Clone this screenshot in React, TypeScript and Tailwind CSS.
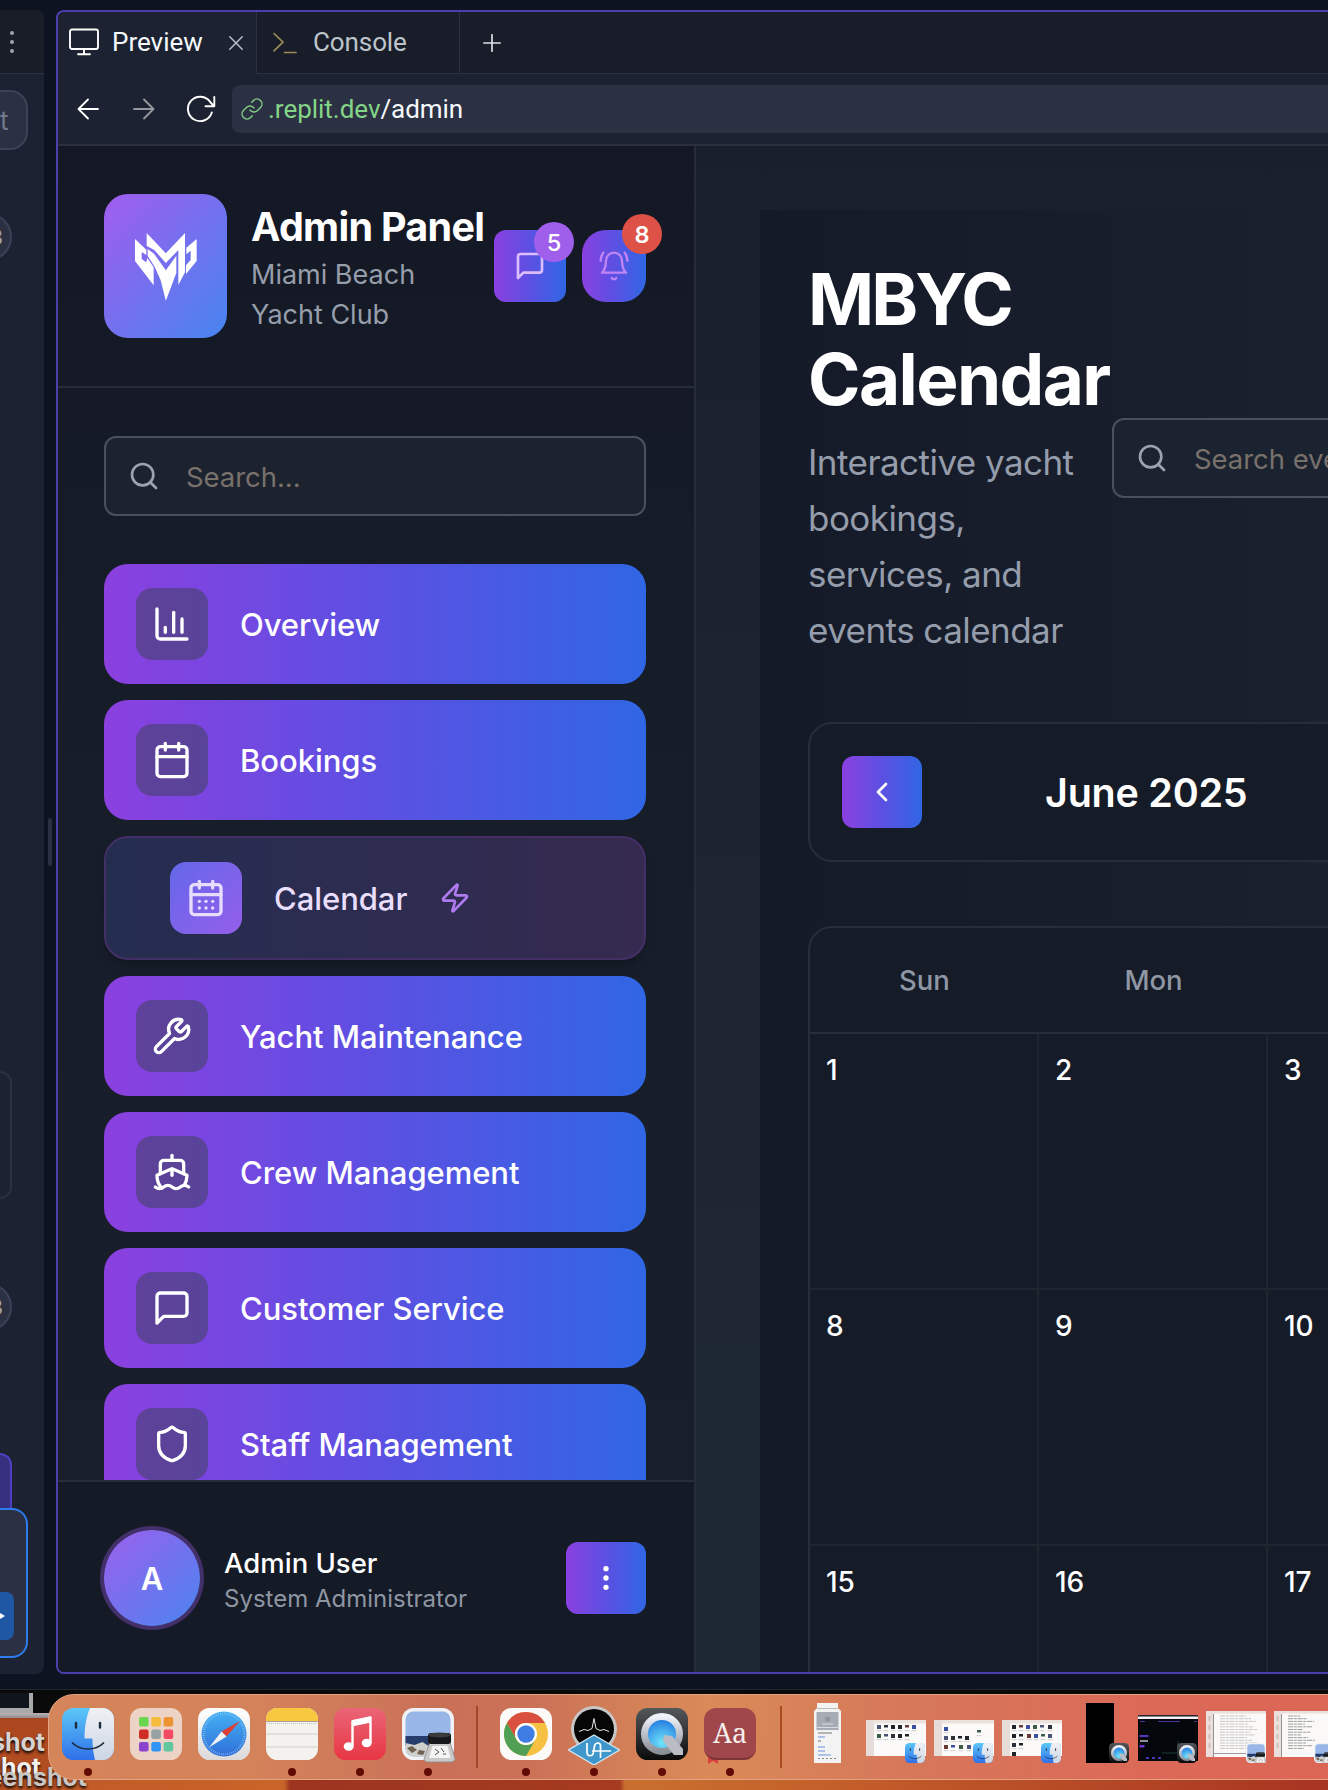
import React from "react";
import { Search, Shield, Wrench, Ship, Zap, Calendar, CalendarDays, ChevronLeft } from "lucide-react";

const stroke = { fill: "none", stroke: "currentColor", strokeLinecap: "round", strokeLinejoin: "round" } as const;

function MessageIcon({ className, w = 2 }: { className: string; w?: number }) {
  return (
    <svg viewBox="0 0 24 24" className={className} {...stroke} strokeWidth={w}>
      <path d="M21 15a2 2 0 0 1-2 2H7l-4 4V5a2 2 0 0 1 2-2h14a2 2 0 0 1 2 2z" />
    </svg>
  );
}

function BellIcon({ className }: { className: string }) {
  return (
    <svg viewBox="0 0 24 24" className={className} {...stroke} strokeWidth={1.8}>
      <path d="M6 8a6 6 0 0 1 12 0c0 7 3 9 3 9H3s3-2 3-9" />
      <path d="M10.3 21a1.94 1.94 0 0 0 3.4 0" />
      <path d="M4 2C2.8 3.7 2 5.7 2 8" />
      <path d="M22 8c0-2.3-.8-4.3-2-6" />
    </svg>
  );
}

function ChartIcon({ className }: { className: string }) {
  return (
    <svg viewBox="0 0 24 24" className={className} {...stroke} strokeWidth={2}>
      <path d="M3 3v16a2 2 0 0 0 2 2h16" />
      <path d="M18 17V9" />
      <path d="M13 17V5" />
      <path d="M8 17v-3" />
    </svg>
  );
}

function DotsIcon({ className }: { className: string }) {
  return (
    <svg viewBox="0 0 24 24" className={className} fill="currentColor">
      <circle cx="12" cy="5" r="2" />
      <circle cx="12" cy="12" r="2" />
      <circle cx="12" cy="19" r="2" />
    </svg>
  );
}

function ClubLogo() {
  return (
    <svg viewBox="3 4 270 270" className="h-[90px] w-[90px]" fill="#fff">
      <path d="M80 40 137.500 101 195 40V158L175 196V91L137.500 130 103 91 80 79Z" />
      <path d="M83 88 102 102 137.500 152 169 108V160L137.500 243 122 182 104 141 83 109Z" />
      <path d="M45 58 79 90V106L65 97V118L79 128 82 115 101 143V197L45 124Z" />
      <path d="M230 58V124L198 163V137L212 121V93L199 104V84Z" />
    </svg>
  );
}

const navIcon = "h-10 w-10";

function NavItem({ label, icon }: { label: string; icon: React.ReactNode }) {
  return (
    <div className="flex h-[120px] shrink-0 items-center rounded-[24px] bg-linear-to-r/srgb from-[#8b40e0] via-[#5c50e2] to-[#3066e4] pl-8 text-white">
      <div className="flex h-[72px] w-[72px] items-center justify-center rounded-[16px] bg-[#374151]/50">{icon}</div>
      <span className="ml-8 pt-0.5 text-[31px] leading-[48px] font-medium tracking-[-0.06px] whitespace-nowrap">{label}</span>
    </div>
  );
}

function Sidebar() {
  return (
    <aside className="flex w-[638px] shrink-0 flex-col border-r-2 border-[#262c38] bg-linear-to-b from-[#131824] via-[#171e2a] to-[#181f2b]">
      <header className="flex h-[242px] shrink-0 items-center border-b-2 border-[#262d38] pl-[46px]">
        <div className="flex h-[144px] w-[123px] items-center justify-center rounded-[24px] bg-linear-to-br/srgb from-[#a15cee] to-[#4785f0]">
          <ClubLogo />
        </div>
        <div className="ml-6 w-[243px] pt-0.5 whitespace-nowrap">
          <div className="text-[39.5px] leading-[56px] font-bold tracking-[-0.7px] text-white">Admin Panel</div>
          <div className="text-[27px] leading-10 text-[#979eab]">Miami Beach</div>
          <div className="text-[27px] leading-10 text-[#979eab]">Yacht Club</div>
        </div>
        <div className="flex gap-4">
          <div className="relative flex h-[72px] w-[72px] items-center justify-center rounded-[12px] bg-linear-to-r/srgb from-[#8b40e0] via-[#5c50e2] to-[#3066e4]">
            <MessageIcon className="h-8 w-8 text-[#dcbcfa]" />
            <span className="absolute -top-2 -right-2 flex h-10 w-10 items-center justify-center rounded-full bg-[#9f5fea] pt-0.5 text-[23.500px] font-medium text-white">5</span>
          </div>
          <div className="relative flex h-[72px] w-[64px] items-center justify-center rounded-[24px] bg-linear-to-r/srgb from-[#8b40e0] via-[#5c50e2] to-[#3066e4]">
            <BellIcon className="h-8 w-8 text-[#bf84f5]" />
            <span className="absolute -top-4 -right-4 flex h-10 w-10 items-center justify-center rounded-full bg-[#de5147] pt-0.5 text-[23.500px] font-semibold text-white">8</span>
          </div>
        </div>
      </header>

      <div className="flex h-[1092px] shrink-0 flex-col gap-4 overflow-hidden pt-12 pr-[48px] pl-[46px]">
        <div className="mb-8 flex h-20 shrink-0 items-center rounded-[12px] border-2 border-[#4a515d] bg-[#1c222e] pl-[22px]">
          <Search className="h-8 w-8 text-[#9ca3af]" />
          <span className="ml-[26px] pt-[3px] text-[27.5px] tracking-[-0.05px] text-[#78716c]">Search...</span>
        </div>
        <NavItem label="Overview" icon={<ChartIcon className={navIcon} />} />
        <NavItem label="Bookings" icon={<Calendar className={navIcon} />} />
        <div className="flex h-[124px] shrink-0 items-center rounded-[24px] border-2 border-[#432f66] bg-linear-to-r/srgb from-[#242d50] to-[#362a50] pl-[62px] shadow-lg shadow-black/15">
          <div className="ml-0.5 flex h-[72px] w-[72px] items-center justify-center rounded-[16px] bg-linear-to-br/srgb from-[#6468ea] to-[#955eea]">
            <CalendarDays className="h-10 w-10 text-[#e6dcfd]" />
          </div>
          <span className="ml-8 w-[165px] pt-0.5 text-[31px] font-medium tracking-[-0.05px] text-[#e9defc]">Calendar</span>
          <Zap className="h-8 w-8 text-[#ae7bee]" />
        </div>
        <NavItem label="Yacht Maintenance" icon={<Wrench className={navIcon} />} />
        <NavItem label="Crew Management" icon={<Ship className={navIcon} />} />
        <NavItem label="Customer Service" icon={<MessageIcon className={navIcon} />} />
        <NavItem label="Staff Management" icon={<Shield className={navIcon} />} />
      </div>

      <footer className="flex flex-1 items-center border-t-2 border-[#262e39] bg-[#141a26] pt-0.5 pl-[46px]">
        <div className="flex h-24 w-24 items-center justify-center rounded-full bg-linear-to-br/srgb from-[#9c60ec] to-[#4a84f0] pt-0.5 text-[31px] font-semibold text-white ring-4 ring-[#43306a]">A</div>
        <div className="ml-6 w-[342px] pt-px whitespace-nowrap">
          <div className="text-[27.5px] leading-10 font-medium text-white">Admin User</div>
          <div className="text-[24px] leading-8 text-[#8f96a3]">System Administrator</div>
        </div>
        <div className="flex h-[72px] w-20 items-center justify-center rounded-[12px] bg-linear-to-r/srgb from-[#8b40e0] via-[#5c50e2] to-[#3066e4]">
          <DotsIcon className="h-8 w-8 text-white" />
        </div>
      </footer>
    </aside>
  );
}

function CalendarMain() {
  const weeks = [["1", "2", "3"], ["8", "9", "10"], ["15", "16", "17"]];
  return (
    <main className="flex-1 overflow-hidden bg-linear-to-b from-[#191f2c] via-[#1e2531] to-[#1d2832] pt-16 pl-16">
      <section className="h-[1470px] w-[760px] bg-linear-to-r from-[#141a27] to-[#1c222f] pt-12 pl-12">
        <div className="flex h-[400px] items-center">
          <div className="w-[304px] shrink-0 whitespace-nowrap">
            <h1 className="relative top-px text-[71px] leading-[80px] font-bold tracking-[-1.6px] text-white">
              <span className="tracking-[-2.9px]">MBYC</span>
              <br />
              Calendar
            </h1>
            <p className="mt-4 text-[35px] leading-[56px] tracking-[-0.55px] text-[#959cab]">
              Interactive yacht
              <br />
              bookings,
              <br />
              services, and
              <br />
              events calendar
            </p>
          </div>
          <div className="flex h-20 w-[440px] shrink-0 items-center rounded-[12px] border-2 border-[#4a515d] bg-[#1c2330] pl-[22px]">
            <Search className="h-8 w-8 text-[#9ca3af]" />
            <span className="ml-[26px] pt-[3px] text-[27.5px] tracking-[-0.05px] whitespace-nowrap text-[#78716c]">Search events...</span>
          </div>
        </div>
        <div className="mt-16 flex h-[140px] w-[700px] items-center rounded-[24px] border-2 border-[#272e3a] bg-[#161b28] pl-8">
          <div className="flex h-[72px] w-20 items-center justify-center rounded-[12px] bg-linear-to-r/srgb from-[#8b40e0] via-[#5c50e2] to-[#3066e4]">
            <ChevronLeft className="h-8 w-8 text-white" />
          </div>
          <h2 className="ml-[123px] pt-[3px] text-[39.5px] font-semibold tracking-[-0.25px] text-white">June 2025</h2>
        </div>
        <div className="mt-16 h-[760px] w-[760px] overflow-hidden rounded-t-[24px] border-2 border-[#272e3a] bg-[#161b28]">
          <div className="grid h-[106px] grid-cols-[229px_229px_229px] items-center border-b-2 border-[#272e3a] pt-0.5 text-center text-[27.5px] font-medium text-[#8f96a4]">
            <span>Sun</span>
            <span>Mon</span>
            <span>Tue</span>
          </div>
          <div className="grid grid-cols-[229px_229px_229px]">
            {weeks.flat().map((day) => (
              <div key={day} className="h-[256px] border-r-2 border-b-2 border-[#20262f] px-4 pt-4 text-[28px] leading-10 font-medium text-white">
                {day}
              </div>
            ))}
          </div>
        </div>
      </section>
    </main>
  );
}

function BrowserChrome() {
  return (
    <div className="shrink-0 bg-[#1c2231] font-[Roboto,Inter,sans-serif]">
      <div className="flex h-[62px] text-[26px]">
        <div className="flex w-[199px] items-center border-r border-[#2b3142] pl-[11px]">
          <svg viewBox="0 0 30 28" className="-mt-0.5 h-7 w-[30px] text-white" {...stroke} strokeWidth={1.9}>
            <rect x="1" y="1.5" width="28" height="19.5" rx="2" />
            <path d="M15 21v5M9 26.3h12" />
          </svg>
          <span className="-mt-px ml-[13px] w-[117px] text-[#f5f9fc]">Preview</span>
          <svg viewBox="0 0 14 14" className="h-[14px] w-[14px] text-[#b9bfca]" {...stroke} strokeWidth={1.5}>
            <path d="M.8.8l12.4 12.4M13.2.8L.8 13.2" />
          </svg>
        </div>
        <div className="flex w-[203px] items-center border-r border-b border-[#2b3142] bg-[#181d29] pl-[15px]">
          <svg viewBox="0 0 26 22" className="h-[22px] w-[26px] text-[#9c8b58]" {...stroke} strokeWidth={1.7}>
            <path d="M2 1.5l9 8.700-9 8.700M12.5 20.500h11.500" />
          </svg>
          <span className="ml-[15px] tracking-[-0.1px] text-[#bdc4cb]">Console</span>
        </div>
        <div className="flex flex-1 items-center border-b border-[#2b3142] bg-[#181d29] pl-[23px]">
          <svg viewBox="0 0 18 18" className="h-[18px] w-[18px] text-[#dde2e8]" {...stroke} strokeWidth={1.7}>
            <path d="M9 .8v16.4M.8 9h16.4" />
          </svg>
        </div>
      </div>
      <div className="flex h-[72px] items-center border-b-2 border-[#2a3040] pl-[19px] text-[26px]">
        <svg viewBox="0 0 22 22" className="h-[22px] w-[22px] text-white" {...stroke} strokeWidth={1.8}>
          <path d="M21 11H1.5M11 1.5L1.5 11l9.5 9.5" />
        </svg>
        <svg viewBox="0 0 22 22" className="ml-[34px] h-[22px] w-[22px] text-[#969a9f]" {...stroke} strokeWidth={1.8}>
          <path d="M1 11h19.5M11 1.5l9.5 9.5-9.5 9.5" />
        </svg>
        <svg viewBox="0 0 30 28" className="ml-[31px] h-7 w-[30px] text-white" {...stroke} strokeWidth={1.9}>
          <path d="M25.8 17.5A12.2 12.2 0 1 1 24.2 7L28 11.2M28.3 2v9.2h-8.8" />
        </svg>
        <div className="ml-[16px] flex h-12 flex-1 items-center rounded-l-[8px] bg-[#2b3042] pl-2">
          <svg viewBox="0 0 24 24" className="h-[24px] w-[24px] text-[#7fcb83]" {...stroke} strokeWidth={1.5}>
            <path d="M10 13a5 5 0 0 0 7.54.54l3-3a5 5 0 0 0-7.07-7.07l-1.72 1.71" />
            <path d="M14 11a5 5 0 0 0-7.54-.54l-3 3a5 5 0 0 0 7.07 7.07l1.71-1.71" />
          </svg>
          <span className="ml-[4px] pt-px tracking-[-0.02px] text-[#85d588]">.replit.dev</span>
          <span className="pt-px tracking-[-0.1px] text-[#f5f9fc]">/admin</span>
        </div>
      </div>
    </div>
  );
}

function LeftPanel() {
  return (
    <div className="relative w-[44px] shrink-0 overflow-hidden rounded-r-[8px] bg-[#1c2231]">
      <div className="flex h-16 flex-col items-start justify-center gap-[5px] border-b border-[#2b3142] bg-[#181d28] pl-[10px]">
        <i className="h-1 w-1 rounded-full bg-[#a0a3a8]" />
        <i className="h-1 w-1 rounded-full bg-[#a0a3a8]" />
        <i className="h-1 w-1 rounded-full bg-[#a0a3a8]" />
      </div>
      <div className="mt-4 flex h-[60px] w-7 items-center rounded-r-[18px] border-2 border-l-0 border-[#3c4257] bg-[#2b3042] text-[26px] text-[#72778a]">t</div>
      <div className="mt-[63px] -ml-9 flex h-12 w-12 items-center justify-end rounded-full border-2 border-[#3c4257] bg-[#2b3042] pr-[7px] text-[22px] text-[#a0a3a8]">3</div>
      <div className="mt-[810px] h-[128px] w-3 rounded-r-[16px] border-2 border-l-0 border-[#2b3142]" />
      <div className="mt-[84px] -ml-9 flex h-12 w-12 items-center justify-end rounded-full border-2 border-[#3c4257] bg-[#2b3042] pr-[7px] text-[22px] text-[#a0a3a8]">3</div>
      <div className="mt-[122px] h-[60px] w-3 rounded-tr-[16px] border-2 border-b-0 border-l-0 border-[#4d3fc0] bg-[#372f80]" />
      <div className="relative -mt-[5px] flex h-[150px] w-7 items-end rounded-r-[16px] border-2 border-l-0 border-[#2e7cec] bg-[#2b3042] pb-4">
        <div className="flex h-12 w-[14px] items-center rounded-r-[8px] bg-[#1f57a5]">
          <svg viewBox="0 0 5 8" className="h-2 w-[5px]">
            <path d="M0 1l5 3-5 3z" fill="#fff" />
          </svg>
        </div>
      </div>
    </div>
  );
}

function FinderIcon({ className }: { className: string }) {
  return (
    <svg viewBox="0 0 52 52" className={className}>
      <defs>
        <linearGradient id="finderBlue" x1="0" y1="0" x2="0" y2="1">
          <stop offset="0" stopColor="#5cc8f8" />
          <stop offset="1" stopColor="#2f70ea" />
        </linearGradient>
        <linearGradient id="finderGray" x1="0" y1="0" x2="0" y2="1">
          <stop offset="0" stopColor="#f0f1f5" />
          <stop offset="1" stopColor="#ccd6e4" />
        </linearGradient>
      </defs>
      <rect width="52" height="52" rx="11.5" fill="url(#finderBlue)" />
      <path d="M28 0h12.500A11.500 11.500 0 0 1 52 11.500v29A11.500 11.500 0 0 1 40.500 52H33c-1.500-6-2.500-13-2.600-21.500H22.500C22.500 19 24.500 8 28 0Z" fill="url(#finderGray)" />
      <path d="M14 15v4.500M38 15v4.500" stroke="#1c2a3d" strokeWidth="2.400" strokeLinecap="round" />
      <path d="M10.500 35c8 8 23 8 31 0" stroke="#1c2a3d" strokeWidth="1.700" fill="none" strokeLinecap="round" />
    </svg>
  );
}

function LaunchpadIcon() {
  const colors = ["#6ad650", "#f5bb3a", "#ec9434", "#cf2e25", "#97a0a3", "#f34a64", "#8b42cc", "#2f94f4", "#62c79e"];
  return (
    <svg viewBox="0 0 52 52" className="h-[52px] w-[52px]">
      <rect width="52" height="52" rx="11.5" fill="#ecd3c6" />
      {colors.map((c, i) => (
        <rect key={c} x={9 + (i % 3) * 12.3} y={9 + Math.floor(i / 3) * 12.500} width="9.600" height="9.600" rx="2" fill={c} />
      ))}
    </svg>
  );
}

function SafariIcon() {
  return (
    <svg viewBox="0 0 52 52" className="h-[52px] w-[52px]">
      <defs>
        <linearGradient id="safariBlue" x1="0" y1="0" x2="0" y2="1">
          <stop offset="0" stopColor="#45b0f3" />
          <stop offset="1" stopColor="#2f6fd9" />
        </linearGradient>
        <linearGradient id="whiteTile" x1="0" y1="0" x2="0" y2="1">
          <stop offset="0" stopColor="#ffffff" />
          <stop offset="1" stopColor="#dcdad8" />
        </linearGradient>
      </defs>
      <rect width="52" height="52" rx="11.5" fill="url(#whiteTile)" />
      <circle cx="26" cy="26" r="22.500" fill="url(#safariBlue)" />
      <circle cx="26" cy="26" r="20.300" fill="none" stroke="#a8d4f5" strokeWidth="2" strokeDasharray=".8 1.32" opacity=".7" />
      <path d="M42 13L23.500 23.500l5 5z" fill="#dd3f35" />
      <path d="M11 39.500l12.500-16 5 5z" fill="#f2f2f2" />
    </svg>
  );
}

function NotesIcon() {
  return (
    <svg viewBox="0 0 52 52" className="h-[52px] w-[52px]">
      <rect width="52" height="52" rx="11.5" fill="#f3f2ef" />
      <path d="M0 13V11.500A11.500 11.500 0 0 1 11.500 0h29A11.500 11.500 0 0 1 52 11.500V13Z" fill="#f7c740" />
      <path d="M0 13.500h52" stroke="#a5a29c" strokeWidth="1" />
      <path d="M1 15.500h50" stroke="#c4c1bc" strokeWidth="1" strokeDasharray="1 1" />
      <path d="M0 26h52M0 39h52" stroke="#d2d0cc" strokeWidth="1" />
    </svg>
  );
}

function MusicIcon() {
  return (
    <svg viewBox="0 0 52 52" className="h-[52px] w-[52px]">
      <defs>
        <linearGradient id="musicRed" x1="0" y1="0" x2="0" y2="1">
          <stop offset="0" stopColor="#ea6577" />
          <stop offset="1" stopColor="#e83644" />
        </linearGradient>
      </defs>
      <rect width="52" height="52" rx="11.5" fill="url(#musicRed)" />
      <path d="M18.500 38V13.200L36.500 9.500v25.500" fill="none" stroke="#fff" strokeWidth="2.400" strokeLinejoin="round" />
      <path d="M18 12.500L37 8.500v6L18 18.500z" fill="#fff" />
      <ellipse cx="14.700" cy="38.500" rx="5" ry="4.200" fill="#fff" />
      <ellipse cx="32.700" cy="35" rx="5" ry="4.200" fill="#fff" />
    </svg>
  );
}

function PreviewAppIcon({ className }: { className: string }) {
  return (
    <svg viewBox="0 0 52 52" className={className}>
      <rect width="52" height="52" rx="11.5" fill="#f0f2f5" />
      <rect x="3.500" y="3.500" width="45" height="45" rx="8" fill="#98b6e8" />
      <path d="M3.500 28h45v10h-45z" fill="#263d6b" />
      <path d="M3.500 35l9 2 8-3 6 4 22-2v5a7.500 7.500 0 0 1-7.500 7.500H11.500A8 8 0 0 1 3.500 41z" fill="#cfd0cc" />
      <path d="M5 40l5-2 5 4-5 3zM17 42l6 1-2 4-6-1z" fill="#6f6251" />
      <path d="M28 34h20l5 17c0 2-2 3-5 3H27c-3 0-5-1-5-3z" fill="#c9c9c9" stroke="#8d8d8d" strokeWidth=".8" />
      <path d="M30.500 38h15l3 12H27z" fill="#f3f3f3" />
      <path d="M33 41l4 3-4 3M39 40l3 4M41 46h3" stroke="#555" strokeWidth="1" fill="none" />
      <rect x="26" y="25" width="23" height="11" rx="3" fill="#17181a" />
      <ellipse cx="37.500" cy="27" rx="11" ry="2.500" fill="#3a3b3d" />
    </svg>
  );
}

function ChromeIcon() {
  return (
    <svg viewBox="0 0 52 52" className="h-[52px] w-[52px]">
      <rect width="52" height="52" rx="11.5" fill="#fbfaf8" />
      <circle cx="26" cy="26" r="22" fill="#f6c142" />
      <path d="M26 4A22 22 0 0 1 45.050 15H26a11 11 0 0 0-9.530 16.500L6.950 15A22 22 0 0 1 26 4z" fill="#d94f40" />
      <path d="M6.950 15l9.520 16.500A11 11 0 0 0 35.530 31.500L26 48A22 22 0 0 1 6.950 15z" fill="#4f9f55" />
      <circle cx="26" cy="26" r="11" fill="#fff" />
      <circle cx="26" cy="26" r="8.700" fill="#3f7de5" />
    </svg>
  );
}

function UAIcon() {
  return (
    <svg viewBox="0 0 52 60" className="mt-[2px] h-[60px] w-[52px] shrink-0">
      <circle cx="26" cy="24" r="23" fill="#c9c7c6" />
      <circle cx="26" cy="24" r="20" fill="#060606" />
      <path d="M11 26.500l5-2 4 1 4-2 2-10 2 10 4 2 4-1 5 2" stroke="#e8e8e8" strokeWidth="1" fill="none" />
      <path d="M26 30l25.500 15L26 60 .5 45z" fill="#3f97cb" stroke="#d5e8f2" strokeWidth="1.200" />
      <path d="M19 38v9c0 5 6 5 6.500 0l1-6c1-4 6-4 6 0v12M24 46h19" stroke="#fff" strokeWidth="1.700" fill="none" />
    </svg>
  );
}

function QuickTimeIcon({ className }: { className: string }) {
  return (
    <svg viewBox="0 0 52 52" className={className}>
      <defs>
        <linearGradient id="qtTile" x1="0" y1="0" x2="0" y2="1">
          <stop offset="0" stopColor="#55585b" />
          <stop offset="1" stopColor="#0a0a0b" />
        </linearGradient>
        <linearGradient id="qtRing" x1="0" y1="0" x2="0" y2="1">
          <stop offset="0" stopColor="#eef2fb" />
          <stop offset="1" stopColor="#8b8f98" />
        </linearGradient>
        <radialGradient id="qtBlue" cx=".5" cy=".75" r=".7">
          <stop offset="0" stopColor="#6fe6fb" />
          <stop offset="1" stopColor="#2277e0" />
        </radialGradient>
      </defs>
      <rect width="52" height="52" rx="11.5" fill="url(#qtTile)" />
      <circle cx="26" cy="26" r="17.500" fill="url(#qtBlue)" stroke="url(#qtRing)" strokeWidth="7" />
      <path d="M28 27l8 1 11 13v6h-9L27 33z" fill="#b9bcc4" />
    </svg>
  );
}

function DictionaryIcon() {
  return (
    <div className="relative h-[52px] w-[52px]">
      <svg viewBox="0 0 10 8" className="absolute top-[48px] left-1 h-2 w-[10px]">
        <path d="M0 0h10v8L5 5 0 8z" fill="#d9433d" />
      </svg>
      <div className="relative flex h-[52px] w-[52px] items-center justify-center rounded-[12px] border-b-2 border-[#7d3436] bg-[#9f474a] font-['Noto_Serif','Liberation_Serif',serif] text-[27px] text-[#f6eeec]">Aa</div>
    </div>
  );
}

function DockApp({ children, running }: { children: React.ReactNode; running?: boolean }) {
  return (
    <div className="relative flex h-[52px] w-[52px] shrink-0 items-center justify-center">
      {children}
      {running && <i className="absolute top-[60px] left-[22px] h-2 w-2 rounded-full bg-[#600b04]" />}
    </div>
  );
}

const finderGrids = [
  [[13, 6], [20, 6], [27, 6], [34, 6], [41, 6], [48, 6], [13, 15], [20, 15], [27, 15], [34, 15], [41, 15]],
  [[12, 8], [45, 11], [12, 17], [19, 17], [26, 17], [33, 17], [12, 26], [19, 26], [27, 26], [35, 26]],
  [[12, 6], [19, 6], [26, 6], [33, 6], [40, 6], [48, 6], [12, 15], [19, 15], [27, 15], [34, 15], [41, 15], [48, 15], [12, 24], [19, 24], [12, 33]],
];

function FinderThumb({ grid }: { grid: number }) {
  const tones = ["#4a5478", "#3b4fa0", "#22252b", "#2c3038", "#3d5c46", "#6a3a34", "#20222a"];
  return (
    <div className="relative h-[60px] w-[60px]">
      <svg viewBox="0 0 60 36" className="mt-[17px] h-[36px] w-[60px]">
        <rect width="60" height="36" fill="#fbfaf9" />
        <rect width="60" height="3.500" fill="#ebe2de" />
        <rect width="8" height="36" fill="#e6dcd8" />
        {finderGrids[grid].map(([x, y], i) => (
          <g key={i}>
            <rect x={x - 2} y={y - 1} width="4" height={i % 3 === 1 ? 2.500 : 4} fill={tones[(i * 3 + grid) % 7]} />
            <rect x={x - 2.500} y={y + 4.500} width="5" height=".6" fill="#b3afad" />
          </g>
        ))}
      </svg>
      <FinderIcon className="absolute top-[40px] left-[39px] h-5 w-5" />
    </div>
  );
}

function DocThumb({ ragged }: { ragged?: boolean }) {
  return (
    <div className="relative h-[60px] w-[60px] shrink-0">
      <svg viewBox="0 0 60 46" className="mt-[8px] h-[46px] w-[60px]">
        <rect width="60" height="46" fill="#faf9f8" />
        <rect width="60" height="2.500" fill="#eadfda" />
        <rect width="7" height="46" fill="#eadfda" />
        <path d="M3.500 5v5M3.500 14v5M3.500 23v5M3.500 32v5" stroke="#d0c0c0" strokeWidth="2" />
        <path d="M7.500 3v43" stroke="#777" strokeWidth=".8" />
        {Array.from({ length: 13 }, (_, i) => (
          <path key={i} d={`M14 ${5 + i * 2.700}h${ragged ? 12 + ((i * 7) % 16) : 26 + ((i * 5) % 13)}`} stroke={ragged ? "#777" : "#b5b3b3"} strokeWidth=".7" strokeDasharray="5 .8 3 .7" />
        ))}
        {!ragged && <path d="M8 42.500h52" stroke="#888" strokeWidth=".8" />}
      </svg>
      <PreviewAppIcon className="absolute top-[40px] left-[40px] h-5 w-5" />
    </div>
  );
}

function Dock() {
  return (
    <div className="relative ml-12 flex h-[86px] w-[1400px] rounded-[26px] border border-[#e5a384] bg-[linear-gradient(91deg,#d5855a_0%,#d4825a_15%,#c97058_28%,#ca7157_34%,#d98a58_47%,#d6775a_62%,#dc6857_80%,#dc6556_100%)] pt-[13px] pl-[13px]">
      <div className="flex gap-4">
        <DockApp running><FinderIcon className="h-[52px] w-[52px]" /></DockApp>
        <DockApp><LaunchpadIcon /></DockApp>
        <DockApp><SafariIcon /></DockApp>
        <DockApp running><NotesIcon /></DockApp>
        <DockApp running><MusicIcon /></DockApp>
        <DockApp running><PreviewAppIcon className="h-[52px] w-[52px] overflow-visible" /></DockApp>
      </div>
      <i className="mt-[-2px] ml-[22px] h-[62px] w-[2px] bg-[#a1472b]" />
      <div className="ml-[22px] flex gap-4">
        <DockApp running><ChromeIcon /></DockApp>
        <DockApp running><UAIcon /></DockApp>
        <DockApp running><QuickTimeIcon className="h-[52px] w-[52px]" /></DockApp>
        <DockApp running><DictionaryIcon /></DockApp>
      </div>
      <i className="mt-[-2px] ml-[24px] h-[62px] w-[2px] bg-[#a94a20]" />
      <div className="-mt-[5px] ml-[32px] flex">
        <svg viewBox="0 0 27 60" className="h-[60px] w-[27px]">
          <path d="M3 0h21v5l3 3v52H0V8l3-3z" fill="#f4f3f3" />
          <path d="M3 5.500h21" stroke="#bdb9b9" />
          <path d="M2.500 9h22v18h-22z" fill="#a6abb4" />
          <circle cx="13.500" cy="16" r="2.500" fill="#8f949e" />
          <path d="M8 21h11M3 24.500h21" stroke="#d9dce2" />
          <path d="M4 30h14M4 38h3" stroke="#666" strokeWidth=".9" />
          <path d="M4 34h7M4 44h7M4 48h7M4 52h13" stroke="#5a82dd" strokeWidth=".9" />
          <path d="M4 55.500h19" stroke="#888" strokeDasharray="2 2" />
        </svg>
        <div className="ml-[25px] flex gap-2">
          <FinderThumb grid={0} />
          <FinderThumb grid={1} />
          <FinderThumb grid={2} />
        </div>
        <div className="relative ml-6 h-[60px] w-7 bg-black">
          <QuickTimeIcon className="absolute top-[40px] left-[23px] h-5 w-5" />
        </div>
        <div className="relative ml-6 h-[60px] w-[60px]">
          <svg viewBox="0 0 60 46" className="mt-[12px] h-[46px] w-[60px]">
            <rect width="60" height="46" fill="#04070b" />
            <rect width="60" height="1.500" fill="#24262c" />
            <rect y="1.500" width="60" height="2.500" fill="#f4f4f6" />
            <path d="M2 6.500h5M20 6.500h22M56 6.500h3" stroke="#5538a8" strokeWidth=".9" />
            <rect x="1.500" y="20" width="9" height="2" fill="#5b34bb" />
            <path d="M2 26h8" stroke="#ddd" strokeWidth="1.300" />
            <rect x="1.500" y="30" width="5" height="2.500" fill="#6b37d0" />
            <path d="M8 43h16" stroke="#4c31ae" strokeWidth="2" strokeDasharray="3 3" />
            <path d="M24 38h30M40 26v12M47 33v4" stroke="#1b3a40" />
          </svg>
          <QuickTimeIcon className="absolute top-[40px] left-[39px] h-5 w-5" />
        </div>
        <div className="ml-2 flex gap-2">
          <DocThumb />
          <DocThumb ragged />
        </div>
      </div>
    </div>
  );
}

function Desktop() {
  return (
    <div className="relative h-[100px] overflow-hidden bg-[#0a0a0b]">
      <div className="absolute inset-x-0 top-[23px] h-[77px] bg-linear-to-b from-[#a9451f] to-[#b85123]" />
      <div className="absolute top-[23px] left-0 h-[5px] w-[60px] bg-linear-to-b from-[#b9b5b4] to-[#8e8b8b]" />
      <div className="absolute top-[3px] left-[-4px] h-[20px] w-[37px] border-r-4 border-b-[5px] border-[#aaa9aa] bg-[#10141d]" />
      <div className="absolute top-[88px] left-[60px] h-3 w-[1268px] bg-[linear-gradient(90deg,#c05a28_0,#c96429_224px,#9c3420_230px,#a53c20_560px,#c87030_565px,#c4602a_760px,#a83422_1268px)]" />
      <div className="absolute top-[40px] -left-[105px] w-[150px] text-right text-[25px] leading-6 font-bold text-[#d6d4d2] [text-shadow:0_2px_3px_#000]">
        Screenshot
      </div>
      <div className="absolute top-[65px] -left-[109px] w-[150px] text-right text-[25px] leading-6 font-bold text-[#f2f0ee] [text-shadow:0_2px_3px_#000]">
        Screenshot
      </div>
      <div className="absolute top-[75px] -left-[63px] w-[150px] text-right text-[25px] leading-6 font-bold text-[#c9c6c3] [text-shadow:0_2px_3px_#000]">
        Screenshot
      </div>
      <div className="absolute top-[4px] left-0">
        <Dock />
      </div>
    </div>
  );
}

export default function App() {
  return (
    <div className="flex h-[1790px] w-[1328px] flex-col overflow-hidden bg-[#0e1321] font-[Inter,'Liberation_Sans',sans-serif]">
      <div className="flex h-[1690px] shrink-0 border-b border-[#24262d] pt-[10px] pb-[15px]">
        <LeftPanel />
        <div className="flex w-3 shrink-0 items-center pl-1">
          <div className="h-12 w-1 rounded-full bg-[#2b3042]" />
        </div>
        <div className="flex flex-1 flex-col overflow-hidden rounded-l-[8px] border-2 border-r-0 border-[#4c3fad]">
          <BrowserChrome />
          <div className="flex min-h-0 flex-1">
            <Sidebar />
            <CalendarMain />
          </div>
        </div>
      </div>
      <Desktop />
    </div>
  );
}
